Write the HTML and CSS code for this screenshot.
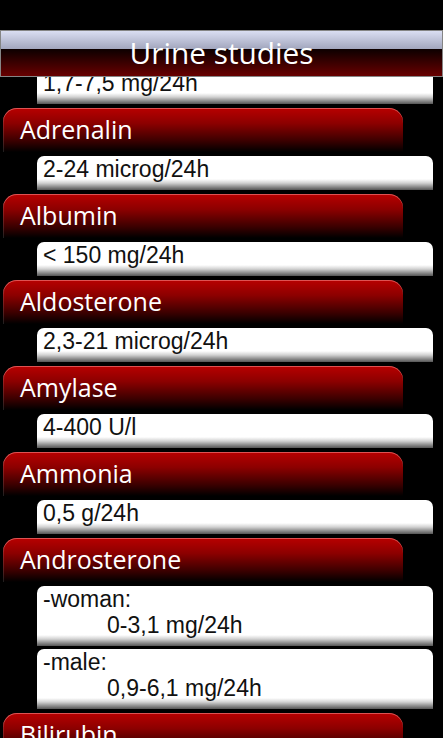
FILE: index.html
```html
<!DOCTYPE html>
<html lang="en">
<head>
<meta charset="utf-8">
<title>Urine studies</title>
<link rel="stylesheet" href="styles.css">
</head>
<body>
<main class="list">
  <div class="card">1,7-7,5 mg/24h</div>
  <section class="item">
    <h2 class="tab">Adrenalin</h2>
    <div class="card">2-24 microg/24h</div>
  </section>
  <section class="item">
    <h2 class="tab">Albumin</h2>
    <div class="card">&lt; 150 mg/24h</div>
  </section>
  <section class="item">
    <h2 class="tab">Aldosterone</h2>
    <div class="card">2,3-21 microg/24h</div>
  </section>
  <section class="item">
    <h2 class="tab">Amylase</h2>
    <div class="card">4-400 U/l</div>
  </section>
  <section class="item">
    <h2 class="tab">Ammonia</h2>
    <div class="card">0,5 g/24h</div>
  </section>
  <section class="item">
    <h2 class="tab">Androsterone</h2>
    <div class="card">-woman:<span class="indent">0-3,1 mg/24h</span></div>
    <div class="card">-male:<span class="indent">0,9-6,1 mg/24h</span></div>
  </section>
  <section class="item">
    <h2 class="tab">Bilirubin</h2>
    <div class="card">&lt; 0,02 mg/24h</div>
  </section>
</main>
<header class="header">
  <h1 class="title">Urine studies</h1>
</header>
</body>
</html>
```
FILE: styles.css
```css
html, body {
  margin: 0;
  padding: 0;
}
body {
  background: #000;
  width: 443px;
  height: 738px;
  overflow: hidden;
  position: relative;
}
.header {
  position: absolute;
  top: 30px;
  left: 0;
  width: 443px;
  height: 47px;
  box-sizing: border-box;
  border: 1px solid #858585;
  background: linear-gradient(to bottom, #dadef2 0, #a2a6bd 18px, #0c0000 18px, #680000 100%);
}
.title {
  margin: 0;
  padding-top: 2px;
  text-align: center;
  font-family: "Open Sans", "DejaVu Sans", sans-serif;
  font-weight: 400;
  font-size: 29.8px;
  line-height: 40px;
  color: #fff;
}
.list {
  display: flex;
  flex-direction: column;
  gap: 4px;
  padding-top: 70px;
}
.item {
  display: flex;
  flex-direction: column;
  gap: 3px;
}
.tab {
  margin: 0 0 1px 3px;
  width: 400px;
  height: 44px;
  box-sizing: border-box;
  padding: 4px 0 0 17px;
  border-radius: 14px 14px 0 0;
  background: linear-gradient(to bottom, #b80000 0, #8c0000 35%, #3a0000 75%, #000 100%);
  box-shadow: inset 0 1px 0 rgba(255, 150, 150, 0.55), inset 1px 0 0 rgba(255, 255, 255, 0.12);
  font-family: "Open Sans", "DejaVu Sans", sans-serif;
  font-weight: 400;
  font-size: 25px;
  line-height: 34px;
  color: #fff;
}
.card {
  margin-left: 37px;
  width: 396px;
  box-sizing: border-box;
  padding: 0 6px 8px;
  border-radius: 7px 7px 0 0;
  background: linear-gradient(to bottom, #fff 0, #fff calc(100% - 11px), #d2d2d2 calc(100% - 7px), #8a8a8a calc(100% - 3px), #555 100%);
  font-family: "Liberation Sans", Arial, sans-serif;
  font-size: 23px;
  line-height: 26px;
  color: #111;
}
.indent {
  display: block;
  padding-left: 64px;
}
```
